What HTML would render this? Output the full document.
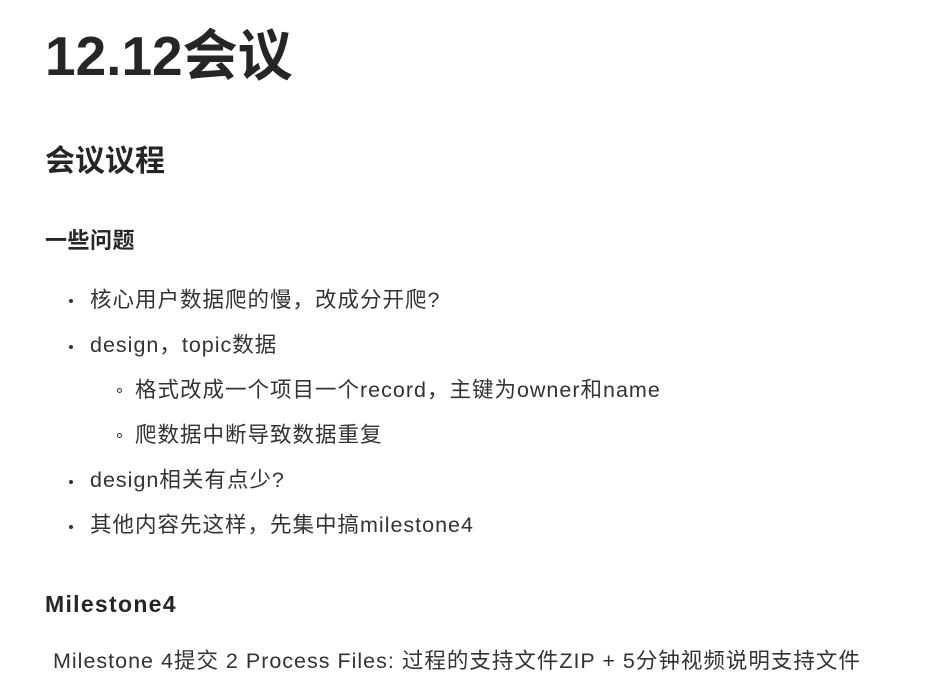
<!DOCTYPE html>
<html><head><meta charset="utf-8"><style>
body{margin:0;width:934px;height:689px;background:#fff;color:#333;font-family:"Liberation Sans","Noto Sans CJK SC",sans-serif;position:relative;overflow:hidden}
.t{position:absolute;white-space:nowrap;line-height:1}
.b{font-size:21.5px;letter-spacing:1px}
.dot{position:absolute;width:4px;height:4px;border-radius:50%;background:#333}
.circ{position:absolute;width:5px;height:5px;border-radius:50%;border:1px solid #333;box-sizing:border-box}
</style></head><body>
<div class="t" style="left:45px;top:29px;font-size:55px;font-weight:bold;color:#262626">12.12会议</div>
<div class="t" style="left:45px;top:147px;font-size:30px;font-weight:bold;color:#262626">会议议程</div>
<div class="t" style="left:45px;top:230px;font-size:22px;font-weight:bold;color:#262626;letter-spacing:0.5px">一些问题</div>
<div class="dot" style="left:69px;top:299px"></div>
<div class="t b" style="left:90px;top:290px">核心用户数据爬的慢，改成分开爬?</div>
<div class="dot" style="left:69px;top:345px"></div>
<div class="t b" style="left:90px;top:335px">design，topic数据</div>
<div class="circ" style="left:117px;top:388px"></div>
<div class="t b" style="left:135px;top:380px">格式改成一个项目一个record，主键为owner和name</div>
<div class="circ" style="left:117px;top:433px"></div>
<div class="t b" style="left:135px;top:425px">爬数据中断导致数据重复</div>
<div class="dot" style="left:69px;top:480px"></div>
<div class="t b" style="left:90px;top:470px">design相关有点少?</div>
<div class="dot" style="left:69px;top:525px"></div>
<div class="t b" style="left:90px;top:515px">其他内容先这样，先集中搞milestone4</div>
<div class="t" style="left:45px;top:593px;font-size:23px;font-weight:bold;color:#262626;letter-spacing:1.3px">Milestone4</div>
<div class="t b" style="left:53px;top:651px">Milestone 4提交 2 Process Files: 过程的支持文件ZIP + 5分钟视频说明支持文件</div>
</body></html>
